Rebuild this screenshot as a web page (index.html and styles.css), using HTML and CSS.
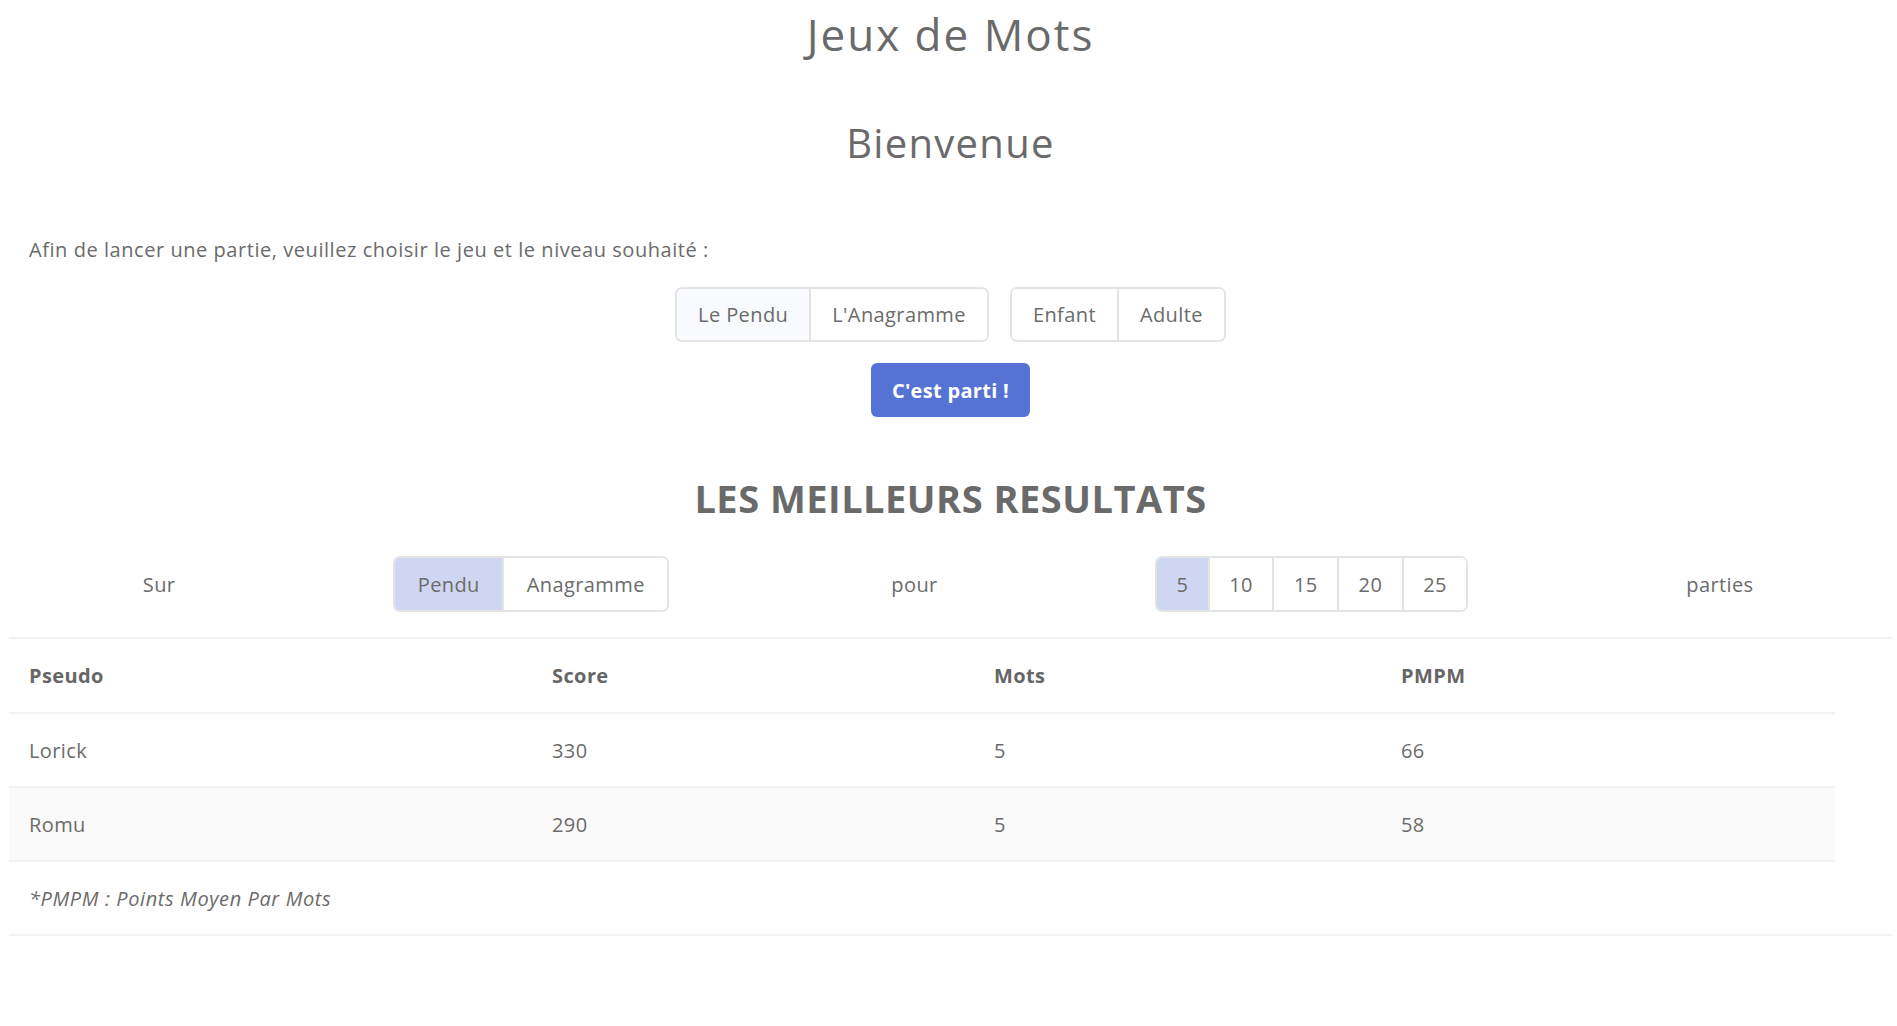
FILE: index.html
```html
<!DOCTYPE html>
<html lang="fr">
<head>
<meta charset="utf-8">
<title>Jeux de Mots</title>
<link rel="stylesheet" href="styles.css">
</head>
<body>
<main class="page">
  <h1 class="title">Jeux de Mots</h1>
  <h2 class="welcome">Bienvenue</h2>
  <p class="intro">Afin de lancer une partie, veuillez choisir le jeu et le niveau souhaité :</p>

  <div class="choices">
    <div class="btn-group">
      <button class="btn btn-soft">Le Pendu</button>
      <button class="btn">L'Anagramme</button>
    </div>
    <div class="btn-group">
      <button class="btn">Enfant</button>
      <button class="btn">Adulte</button>
    </div>
  </div>

  <div class="go-row">
    <button class="btn-go">C'est parti !</button>
  </div>

  <h3 class="best">LES MEILLEURS RESULTATS</h3>

  <div class="filters">
    <div class="filter-cell">Sur</div>
    <div class="filter-cell">
      <div class="btn-group">
        <button class="btn btn-game btn-active">Pendu</button>
        <button class="btn btn-game">Anagramme</button>
      </div>
    </div>
    <div class="filter-cell">pour</div>
    <div class="filter-cell">
      <div class="btn-group">
        <button class="btn btn-num btn-active">5</button>
        <button class="btn btn-num">10</button>
        <button class="btn btn-num">15</button>
        <button class="btn btn-num">20</button>
        <button class="btn btn-num">25</button>
      </div>
    </div>
    <div class="filter-cell">parties</div>
  </div>

  <section class="results">
    <table class="scores">
      <colgroup>
        <col class="c1"><col class="c2"><col class="c3"><col class="c4">
      </colgroup>
      <thead>
        <tr><th>Pseudo</th><th>Score</th><th>Mots</th><th>PMPM</th></tr>
      </thead>
      <tbody>
        <tr><td>Lorick</td><td>330</td><td>5</td><td>66</td></tr>
        <tr class="striped"><td>Romu</td><td>290</td><td>5</td><td>58</td></tr>
      </tbody>
    </table>
    <div class="note">*PMPM : Points Moyen Par Mots</div>
  </section>
</main>
</body>
</html>
```
FILE: styles.css
```css
* { box-sizing: border-box; }

html, body {
  margin: 0;
  padding: 0;
  background: #ffffff;
}

body {
  font-family: "Open Sans", "Liberation Sans", sans-serif;
  color: #6b6b6b;
  font-size: 20px;
  letter-spacing: 0.4px;
}

.page {
  padding: 0 5px 0 9px;
}

.title {
  margin: 0;
  font-weight: 400;
  font-size: 44px;
  letter-spacing: 2px;
  line-height: 68px;
  text-align: center;
  color: #6a6a6a;
}

.welcome {
  margin: 45px 0 0;
  font-weight: 400;
  font-size: 40px;
  letter-spacing: 1.3px;
  line-height: 60px;
  text-align: center;
  color: #6a6a6a;
}

.intro {
  margin: 63px 0 0;
  padding-left: 20px;
  line-height: 28px;
  font-size: 20px;
  letter-spacing: 0.55px;
}

.choices {
  margin-top: 23px;
  display: flex;
  justify-content: center;
  gap: 21px;
}

.btn-group {
  display: inline-flex;
  height: 55px;
  border: 2px solid #e4e4e4;
  border-radius: 7px;
  overflow: hidden;
  background: #fff;
}

.btn {
  font-family: inherit;
  font-size: 20px;
  letter-spacing: 0.4px;
  color: #6b6b6b;
  background: #fff;
  border: 0;
  border-left: 2px solid #e4e4e4;
  padding: 0 21px;
  margin: 0;
  cursor: pointer;
}

.btn:first-child { border-left: 0; }

.btn-soft { background: #f9fafe; }

.btn-active { background: #cfd6f1; }

.btn-game { padding: 0 22.5px; }

.btn-num { padding: 0 19.5px; }

.go-row {
  margin-top: 21px;
  display: flex;
  justify-content: center;
}

.btn-go {
  font-family: inherit;
  font-size: 20px;
  letter-spacing: 0.3px;
  font-weight: 700;
  color: #ffffff;
  background: #5573d5;
  border: 0;
  border-radius: 6px;
  width: 159px;
  height: 54px;
  cursor: pointer;
}

.best {
  margin: 56px 0 0;
  font-size: 38px;
  font-weight: 700;
  line-height: 50px;
  text-align: center;
  color: #6a6a6a;
  letter-spacing: 0.5px;
}

.filters {
  margin-top: 33px;
  display: grid;
  grid-template-columns: 300fr 444fr 322fr 472fr 344fr;
  align-items: center;
  height: 56px;
}

.filter-cell {
  display: flex;
  justify-content: center;
  align-items: center;
  text-align: center;
}

.filters .btn-group { height: 56px; }

.results {
  margin-top: 25px;
  border-top: 2px solid #f2f2f2;
}

.scores {
  width: 1826px;
  border-collapse: collapse;
  table-layout: fixed;
}

.scores .c1 { width: 523px; }
.scores .c2 { width: 442px; }
.scores .c3 { width: 407px; }
.scores .c4 { width: 454px; }

.scores th,
.scores td {
  height: 74px;
  padding: 0 0 0 20px;
  text-align: left;
  vertical-align: middle;
  border-bottom: 2px solid #f2f2f2;
  font-size: 20px;
}

.scores th {
  font-weight: 700;
  color: #666666;
}

.scores .striped td { background: #fafafa; }

.note {
  height: 74px;
  display: flex;
  align-items: center;
  padding-left: 20px;
  font-style: italic;
  letter-spacing: 0.6px;
  border-bottom: 2px solid #f2f2f2;
}
```
